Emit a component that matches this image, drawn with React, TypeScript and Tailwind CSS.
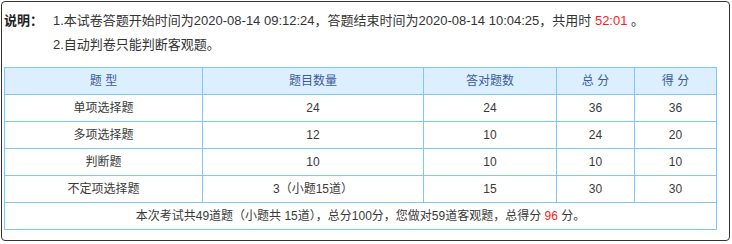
import React from "react";

const rows = [
  { type: "单项选择题", count: "24", right: "24", total: "36", score: "36" },
  { type: "多项选择题", count: "12", right: "10", total: "24", score: "20" },
  { type: "判断题", count: "10", right: "10", total: "10", score: "10" },
  { type: "不定项选择题", count: "3（小题15道）", right: "15", total: "30", score: "30" },
];

const cell = "border border-[#80c6f7] text-center h-[27px] p-0";

export default function App() {
  return (
    <div className="pt-px pl-px" style={{ fontFamily: '"Liberation Sans", "Noto Sans CJK SC", sans-serif' }}>
      <div className="w-[729px] h-[240px] border border-[#333] rounded-[4px] text-[13px] text-[#333] pl-[2px] pt-[7px]">
        <div className="flex">
          <div className="w-[49px] font-bold leading-[24px] text-[#222]">说明：</div>
          <div className="leading-[24px]">
            <div>
              1.本试卷答题开始时间为2020-08-14 09:12:24，答题结束时间为2020-08-14 10:04:25，共用时{" "}
              <span className="text-[#ff1a1a]">52:01</span> 。
            </div>
            <div>2.自动判卷只能判断客观题。</div>
          </div>
        </div>
        <table className="mt-[10px] border-collapse w-[712px] table-fixed text-[12px] text-[#3a3a3a]">
          <colgroup>
            <col className="w-[198px]" />
            <col className="w-[221px]" />
            <col className="w-[133px]" />
            <col className="w-[78px]" />
            <col className="w-[82px]" />
          </colgroup>
          <thead>
            <tr className="bg-[#dcefff] text-[#3b5c9c]">
              <th className={`${cell} font-normal`}>题 型</th>
              <th className={`${cell} font-normal`}>题目数量</th>
              <th className={`${cell} font-normal`}>答对题数</th>
              <th className={`${cell} font-normal`}>总 分</th>
              <th className={`${cell} font-normal`}>得 分</th>
            </tr>
          </thead>
          <tbody>
            {rows.map((r) => (
              <tr key={r.type}>
                <td className={cell}>{r.type}</td>
                <td className={cell}>{r.count}</td>
                <td className={cell}>{r.right}</td>
                <td className={cell}>{r.total}</td>
                <td className={cell}>{r.score}</td>
              </tr>
            ))}
            <tr>
              <td colSpan={5} className={cell}>
                本次考试共49道题（小题共 15道），总分100分，您做对59道客观题，总得分{" "}
                <span className="text-[#ff1a1a]">96</span> 分。
              </td>
            </tr>
          </tbody>
        </table>
      </div>
    </div>
  );
}
